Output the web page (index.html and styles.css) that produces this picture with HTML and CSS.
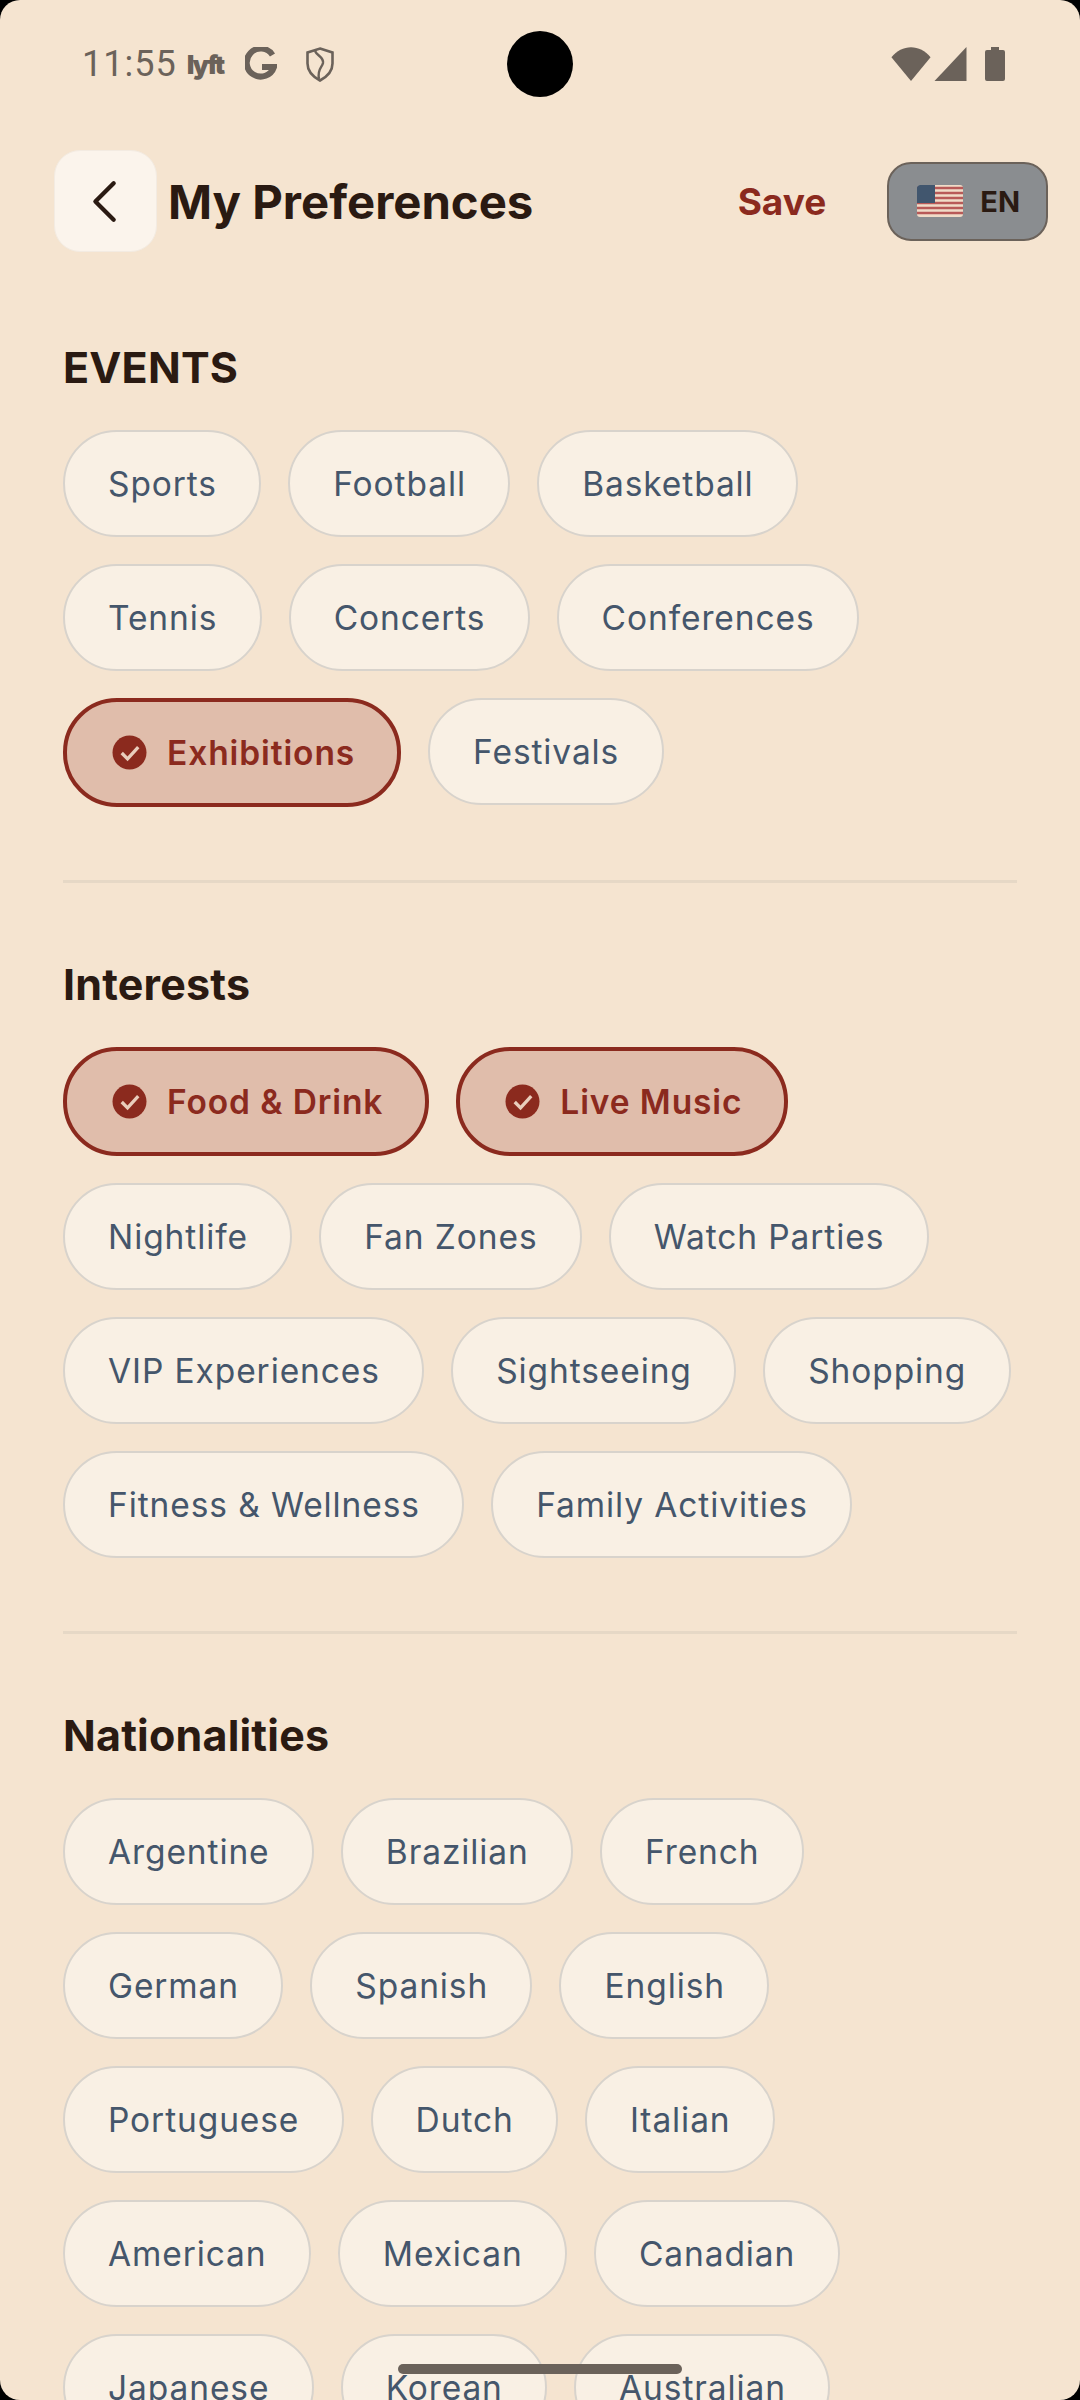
FILE: index.html
```html
<!DOCTYPE html>
<html lang="en">
<head>
    <meta charset="UTF-8">
    <meta name="viewport" content="width=device-width, initial-scale=1.0">
    <title>My Preferences</title>
    <link rel="stylesheet" href="styles.css">
</head>
<body>
    <div class="screen">
        <div class="status-bar">
            <div class="status-left">
                <span class="clock">11:55</span>
                <span class="lyft">lyft</span>
                <svg class="icon-g" viewBox="0 0 32 34"><path d="M27.500 8A14 14 0 1 0 29 20H17" fill="none" stroke="#6b625a" stroke-width="6"/></svg>
                <svg class="icon-shield" viewBox="0 0 28 35"><path d="M14 1.500l12.500 4v11c0 8-5 13-12.500 17C6.500 29.500 1.500 24.500 1.500 16.500v-11z" fill="none" stroke="#6b625a" stroke-width="2.600"/><path d="M9 4c2 5 9 6 8 12-1 5-6 6-4 16" fill="none" stroke="#6b625a" stroke-width="2.400"/></svg>
            </div>
            <div class="status-right">
                <svg class="icon-wifi" viewBox="0 0 38 33"><path d="M0 10C10-3 28-3 38 10L19 33z" fill="#6b625a"/></svg>
                <svg class="icon-signal" viewBox="0 0 31 33"><path d="M31 0v33H0z" fill="#6b625a"/></svg>
                <svg class="icon-battery" viewBox="0 0 20 34"><path d="M6 0h8v3h4a2 2 0 0 1 2 2v27a2 2 0 0 1-2 2H2a2 2 0 0 1-2-2V5a2 2 0 0 1 2-2h4z" fill="#6b625a"/></svg>
            </div>
        </div>

        <header class="top-bar">
            <button class="back-btn">
                <svg viewBox="0 0 24 40"><path d="M21 3L4 20l17 17" fill="none" stroke="#2a1a12" stroke-width="4" stroke-linecap="round" stroke-linejoin="round"/></svg>
            </button>
            <h1 class="page-title">My Preferences</h1>
            <span class="save-link">Save</span>
            <button class="lang-btn">
                <svg class="flag" viewBox="0 0 46 32">
                    <rect width="46" height="32" rx="3" fill="#f0dcc8"/>
                    <path d="M0 3h46M0 8h46M0 13h46M0 18h46M0 23h46M0 28h46" stroke="#b85a58" stroke-width="2.500"/>
                    <path d="M3 0h15v18H0V3a3 3 0 0 1 3-3z" fill="#41566e"/>
                </svg>
                <span>EN</span>
            </button>
        </header>

        <main class="content">
            <section class="group">
                <h2 class="group-title">EVENTS</h2>
                <div class="chips">
                    <span class="chip">Sports</span>
                    <span class="chip">Football</span>
                    <span class="chip">Basketball</span>
                    <span class="chip">Tennis</span>
                    <span class="chip">Concerts</span>
                    <span class="chip">Conferences</span>
                    <span class="chip selected"><svg class="check" viewBox="0 0 36 36"><circle cx="18" cy="18" r="17.500" fill="#8b2a1e"/><path d="M10 18.500l6 6 11-12" fill="none" stroke="#e9cdbc" stroke-width="3.400"/></svg>Exhibitions</span>
                    <span class="chip">Festivals</span>
                </div>
            </section>
            <section class="group">
                <h2 class="group-title">Interests</h2>
                <div class="chips">
                    <span class="chip selected"><svg class="check" viewBox="0 0 36 36"><circle cx="18" cy="18" r="17.500" fill="#8b2a1e"/><path d="M10 18.500l6 6 11-12" fill="none" stroke="#e9cdbc" stroke-width="3.400"/></svg>Food &amp; Drink</span>
                    <span class="chip selected"><svg class="check" viewBox="0 0 36 36"><circle cx="18" cy="18" r="17.500" fill="#8b2a1e"/><path d="M10 18.500l6 6 11-12" fill="none" stroke="#e9cdbc" stroke-width="3.400"/></svg>Live Music</span>
                    <span class="chip">Nightlife</span>
                    <span class="chip">Fan Zones</span>
                    <span class="chip">Watch Parties</span>
                    <span class="chip">VIP Experiences</span>
                    <span class="chip">Sightseeing</span>
                    <span class="chip">Shopping</span>
                    <span class="chip">Fitness &amp; Wellness</span>
                    <span class="chip">Family Activities</span>
                </div>
            </section>
            <section class="group">
                <h2 class="group-title">Nationalities</h2>
                <div class="chips">
                    <span class="chip">Argentine</span>
                    <span class="chip">Brazilian</span>
                    <span class="chip">French</span>
                    <span class="chip">German</span>
                    <span class="chip">Spanish</span>
                    <span class="chip">English</span>
                    <span class="chip">Portuguese</span>
                    <span class="chip">Dutch</span>
                    <span class="chip">Italian</span>
                    <span class="chip">American</span>
                    <span class="chip">Mexican</span>
                    <span class="chip">Canadian</span>
                    <span class="chip">Japanese</span>
                    <span class="chip">Korean</span>
                    <span class="chip">Australian</span>
                </div>
            </section>
        </main>

        <div class="camera"></div>
        <div class="home-bar"></div>
    </div>
</body>
</html>
```

FILE: styles.css
```css
body {
    margin: 0;
    padding: 0;
    background-color: #000;
    font-family: Inter, "Noto Sans", sans-serif;
}

.screen {
    position: relative;
    width: 1080px;
    height: 2400px;
    overflow: hidden;
    background-color: #f5e4d0;
    border-radius: 20px;
}

.status-bar {
    display: flex;
    justify-content: space-between;
    align-items: center;
    height: 64px;
    padding: 32px 75px 0 82px;
}

.status-left,
.status-right {
    display: flex;
    align-items: center;
}

.clock {
    font-family: Roboto, sans-serif;
    font-size: 36px;
    letter-spacing: 1px;
    color: #6b625a;
}

.lyft {
    margin-left: 10px;
    font-size: 26px;
    font-weight: 900;
    letter-spacing: -2.200px;
    color: #6b625a;
}

.icon-g {
    width: 32px;
    height: 34px;
    margin-left: 22px;
}

.icon-shield {
    width: 30px;
    height: 35px;
    margin-left: 28px;
}

.icon-wifi {
    width: 40px;
    height: 34px;
}

.icon-signal {
    width: 33px;
    height: 34px;
    margin-left: 3px;
}

.icon-battery {
    width: 20px;
    height: 34px;
    margin-left: 18px;
}

.top-bar {
    display: flex;
    align-items: center;
    height: 104px;
    margin-top: 53px;
    padding: 0 32px 0 54px;
}

.back-btn {
    display: flex;
    align-items: center;
    justify-content: center;
    width: 103px;
    height: 102px;
    padding: 0 3px 0 0;
    background-color: #fbf4ec;
    border: 1px solid #f3ebe2;
    border-radius: 26px;
}

.back-btn svg {
    width: 26px;
    height: 43px;
}

.page-title {
    flex: 1;
    margin: 0 0 0 11px;
    font-size: 47.300px;
    font-weight: 700;
    color: #2a1a12;
}

.save-link {
    margin-right: 61px;
    font-size: 37px;
    font-weight: 700;
    color: #8b2a1e;
}

.lang-btn {
    display: flex;
    align-items: center;
    gap: 16px;
    height: 79px;
    padding: 0 26px 0 27px;
    background-color: #8a8d90;
    border: 2px solid #6b625a;
    border-radius: 24px;
    font-family: Inter, sans-serif;
    font-size: 29px;
    font-weight: 700;
    color: #2a1a12;
}

.flag {
    width: 48px;
    height: 32px;
}

.content {
    padding: 0 63px;
}

.group {
    padding: 77px 0 73px;
    border-bottom: 3px solid #e6d8c6;
}

.group:first-child {
    padding-top: 90px;
}

.group:last-child {
    border-bottom: none;
}

.group-title {
    margin: 0 0 39px;
    font-size: 43px;
    font-weight: 700;
    line-height: 48px;
    letter-spacing: 0.2px;
    color: #2a1a12;
}

.chips {
    display: flex;
    flex-wrap: wrap;
    align-items: flex-start;
    gap: 27px;
}

.chip {
    display: flex;
    align-items: center;
    box-sizing: border-box;
    height: 107px;
    padding: 0 42.300px 0 43px;
    background-color: #f9f0e4;
    border: 2px solid #d8d3cc;
    border-radius: 54px;
    font-size: 33.500px;
    letter-spacing: 0.9px;
    color: #45566b;
}

.chip.selected {
    height: 109px;
    padding: 0 42px 0 45px;
    background-color: #e0bdab;
    border: 4px solid #8b2a1e;
    font-weight: 600;
    color: #8b2a1e;
}

.check {
    width: 35px;
    height: 35px;
    margin-right: 20px;
    flex-shrink: 0;
}

.camera {
    position: absolute;
    top: 31px;
    left: 507px;
    width: 66px;
    height: 66px;
    background-color: #000;
    border-radius: 50%;
}

.home-bar {
    position: absolute;
    top: 2364px;
    left: 398px;
    width: 284px;
    height: 10px;
    background-color: #6b625a;
    border-radius: 5px;
}
```
